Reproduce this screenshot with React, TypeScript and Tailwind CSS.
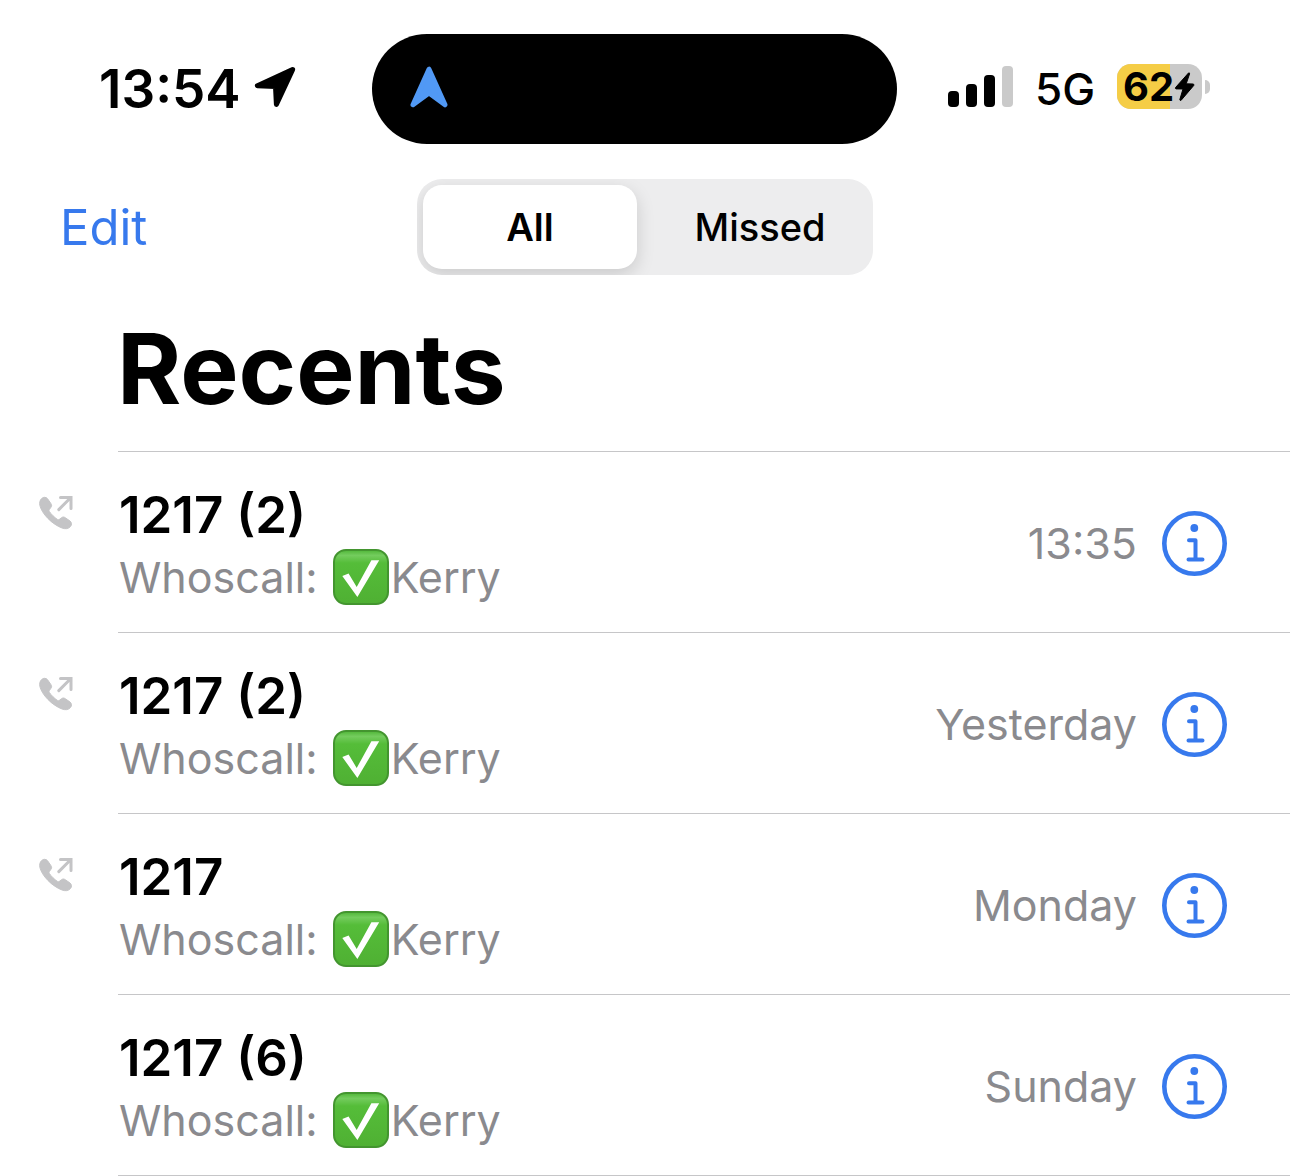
import { useState } from "react";
import { clsx } from "clsx";

interface Call {
  id: number;
  name: string;
  caller: string;
  when: string;
  outgoing: boolean;
}

const calls: Call[] = [
  { id: 1, name: "1217 (2)", caller: "Kerry", when: "13:35", outgoing: true },
  { id: 2, name: "1217 (2)", caller: "Kerry", when: "Yesterday", outgoing: true },
  { id: 3, name: "1217", caller: "Kerry", when: "Monday", outgoing: true },
  { id: 4, name: "1217 (6)", caller: "Kerry", when: "Sunday", outgoing: false },
];

const filters = ["All", "Missed"] as const;

function LocationIcon() {
  return (
    <svg viewBox="0 0 42 42" className="size-[42px] shrink-0" aria-hidden="true">
      <path
        d="M38.6 3.6 3.4 19.8 21.5 20.6 22.4 38.4Z"
        fill="currentColor"
        stroke="currentColor"
        strokeWidth="5"
        strokeLinejoin="round"
      />
    </svg>
  );
}

function NavigationIcon() {
  return (
    <svg viewBox="0 0 38 42" className="h-[42px] w-[38px] text-[#5199f5]" aria-hidden="true">
      <path
        d="M19 3.2 3 38.8 19 27 35 38.8Z"
        fill="currentColor"
        stroke="currentColor"
        strokeWidth="5"
        strokeLinejoin="round"
      />
    </svg>
  );
}

function SignalBars() {
  return (
    <div className="flex items-end gap-[7px]" role="img" aria-label="Signal, 3 of 4 bars">
      <span className="h-4 w-[11px] rounded-[4px] bg-black" />
      <span className="h-[23px] w-[11px] rounded-[4px] bg-black" />
      <span className="h-8 w-[11px] rounded-[4px] bg-black" />
      <span className="h-[41px] w-[11px] rounded-[4px] bg-[#cacaca]" />
    </div>
  );
}

function Battery({ level }: { level: number }) {
  return (
    <div className="flex items-center gap-[3px]">
      <div className="relative flex h-[45px] w-[85px] items-center rounded-[14px] bg-[#cacaca] pl-[6px]">
        <div className="absolute inset-y-0 left-0 rounded-l-[14px] bg-[#f5cd46]" style={{ width: `${level}%` }} />
        <span className="relative text-[40px] leading-[45px] font-bold">{level}</span>
        <svg viewBox="0 0 21 30" className="relative h-[30px] w-[21px] shrink-0" aria-hidden="true">
          <path
            d="M14.5 1 1.5 15.6Q1 16.8 2.2 16.9L9 17 5.8 27.6Q6 29 7.2 28.2L19.8 13.4Q20.4 12.2 19 12L12.2 11.8 15.6 1.8Q15.6.4 14.5 1Z"
            fill="currentColor"
            stroke="currentColor"
          />
        </svg>
      </div>
      <span className="h-[14px] w-[5px] rounded-r-full bg-[#cacaca]" />
    </div>
  );
}

function StatusBar() {
  return (
    <div className="grid h-[110px] grid-cols-[1fr_525px_1fr] items-center pr-[21px]">
      <div className="flex items-center gap-[13px] pb-1 pl-[99px]">
        <span className="pt-1 text-[53px] leading-[60px] font-semibold">13:54</span>
        <LocationIcon />
      </div>
      <div className="flex h-full items-center rounded-full bg-black pb-1 pl-[38px]">
        <NavigationIcon />
      </div>
      <div className="flex items-center gap-[22px] pb-[5px] pl-[51px]">
        <SignalBars />
        <span className="pt-1 text-[44px] leading-[50px] font-medium">5G</span>
        <Battery level={62} />
      </div>
    </div>
  );
}

function OutgoingCallIcon() {
  return (
    <svg viewBox="0 0 34 34" className="size-[34px] text-[#c4c4c6]" role="img" aria-label="Outgoing call">
      <path
        d="M2.6 2.6C4.6.8 7 .9 8.6 2.8L11.8 7.4C13 9.2 12.8 10.4 11.6 11.8L10.4 13.4C9.9 14.1 9.9 14.8 10.3 15.4 12.2 18.2 15.4 21.4 18.4 23.4 19.1 23.8 19.8 23.8 20.4 23.3L22.4 21.8C23.7 20.8 24.9 20.7 26.4 21.8L31 25C32.8 26.5 33 28.8 31.4 30.6 29.4 32.9 26.4 33.3 22.8 31.9 18.4 30.2 13.2 26.9 8.9 22.4 4.6 18 1.9 13.4.9 9.6.3 6.8.8 4.3 2.6 2.6Z"
        fill="currentColor"
        stroke="currentColor"
      />
      <path
        d="M19.8 13.6 31.6 1.8M21.5 1.6H32V12.6"
        fill="none"
        stroke="currentColor"
        strokeWidth="3"
        strokeLinecap="round"
        strokeLinejoin="miter"
      />
    </svg>
  );
}

function VerifiedBadge() {
  return (
    <svg viewBox="0 0 56 56" className="size-14 shrink-0" role="img" aria-label="Verified">
      <defs>
        <linearGradient id="badge" x1="0" y1="0" x2="0" y2="1">
          <stop offset="0" stopColor="#4fb637" />
          <stop offset="0.1" stopColor="#74cc5e" />
          <stop offset="0.24" stopColor="#55bd39" />
          <stop offset="1" stopColor="#4fb033" />
        </linearGradient>
      </defs>
      <rect x="1" y="1" width="54" height="54" rx="12" fill="url(#badge)" stroke="#43952f" strokeWidth="2" />
      <path d="M9.3 27 15.6 24.4 23.7 38 38.4 11.3H46.2L24.4 48Z" fill="#fff" />
    </svg>
  );
}

function InfoIcon() {
  return (
    <svg viewBox="0 0 65 65" className="size-[65px]" aria-hidden="true">
      <g fill="none" stroke="currentColor" strokeLinecap="round" strokeLinejoin="round">
        <circle cx="32.5" cy="32.5" r="30.2" strokeWidth="4.6" />
        <path d="M27 29.2H33.5V48.5M26.5 48.5H40.5" strokeWidth="4" />
      </g>
      <circle cx="32.3" cy="17" r="3.9" fill="currentColor" />
    </svg>
  );
}

function CallRow({ call }: { call: Call }) {
  return (
    <li className="flex">
      <div className="w-[118px] shrink-0 pt-11 pl-[39px]">{call.outgoing && <OutgoingCallIcon />}</div>
      <div className="flex h-[181px] min-w-0 flex-1 items-center justify-between border-b border-[#c6c6c8] pt-[3px] pr-[63px]">
        <div className="pt-1 pl-px">
          <p className="text-[51px] leading-[62px] font-semibold">{call.name}</p>
          <p className="flex items-center text-[43px] leading-[62px] text-[#8a8a8e]">
            <span className="mr-[15px]">Whoscall:</span>
            <VerifiedBadge />
            <span className="ml-0.5">{call.caller}</span>
          </p>
        </div>
        <div className="flex items-center gap-[25px]">
          <time className="pb-0.5 text-[43px] leading-[62px] text-[#8a8a8e]">{call.when}</time>
          <button type="button" aria-label={`Details for ${call.name}`} className="cursor-pointer text-[#3779ed]">
            <InfoIcon />
          </button>
        </div>
      </div>
    </li>
  );
}

export default function App() {
  const [filter, setFilter] = useState<(typeof filters)[number]>("All");
  const visibleCalls = filter === "All" ? calls : [];

  return (
    <main className="bg-white pt-[34px] font-['Inter','Liberation_Sans',sans-serif] text-black">
      <StatusBar />

      <header className="mt-[35px] grid grid-cols-[1fr_456px_1fr] items-center">
        <button
          type="button"
          className="cursor-pointer justify-self-start pt-0.5 pl-[60px] text-[49px] leading-[60px] text-[#3779ed]"
        >
          Edit
        </button>
        <div className="flex h-24 gap-4 overflow-hidden rounded-[25px] bg-[#ededee] p-1.5">
          {filters.map((f) => (
            <button
              key={f}
              type="button"
              aria-pressed={filter === f}
              onClick={() => setFilter(f)}
              className={clsx(
                "flex-1 cursor-pointer rounded-[19px] text-[38px] leading-[48px]",
                filter === f ? "bg-white font-semibold shadow-[0_6px_18px_rgba(0,0,0,0.15)]" : "font-medium",
              )}
            >
              {f}
            </button>
          ))}
        </div>
      </header>

      <h1 className="mt-[34px] pl-[117px] text-[98px] leading-[120px] font-bold">Recents</h1>

      {/* divider starts level with the call names */}
      <div className="mt-[22px] ml-[118px] border-t border-[#c6c6c8]" />
      <ul>
        {visibleCalls.map((call) => (
          <CallRow key={call.id} call={call} />
        ))}
      </ul>
    </main>
  );
}
